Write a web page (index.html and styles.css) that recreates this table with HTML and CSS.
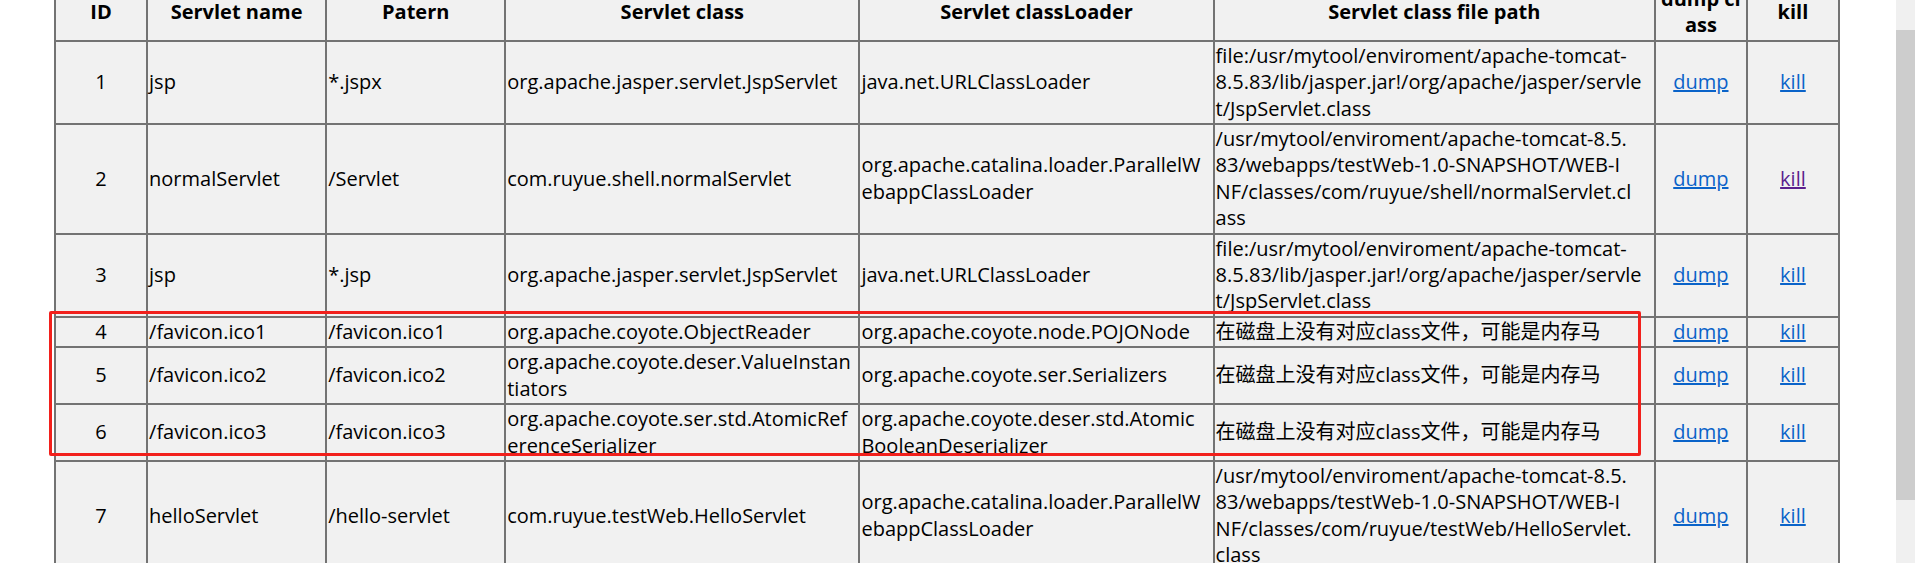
FILE: index.html
```html
<!DOCTYPE html>
<html lang="zh-CN">
<head>
<meta charset="utf-8">
<title>Servlet list</title>
<link rel="stylesheet" href="styles.css">
</head>
<body>
<div class="page">
  <div class="wrap">
    <table class="servlets">
      <colgroup>
        <col class="c-id">
        <col class="c-name">
        <col class="c-pat">
        <col class="c-class">
        <col class="c-loader">
        <col class="c-path">
        <col class="c-dump">
        <col class="c-kill">
      </colgroup>
      <thead>
        <tr>
          <th>ID</th>
          <th>Servlet name</th>
          <th>Patern</th>
          <th>Servlet class</th>
          <th>Servlet classLoader</th>
          <th>Servlet class file path</th>
          <th>dump cl<br>ass</th>
          <th>kill</th>
        </tr>
      </thead>
      <tbody>
        <tr>
          <td class="id">1</td>
          <td>jsp</td>
          <td>*.jspx</td>
          <td>org.apache.jasper.servlet.JspServlet</td>
          <td>java.net.URLClassLoader</td>
          <td>file:/usr/mytool/enviroment/apache-tomcat-<br>8.5.83/lib/jasper.jar!/org/apache/jasper/servle<br>t/JspServlet.class</td>
          <td class="act"><a href="#d1">dump</a></td>
          <td class="act"><a href="#k1">kill</a></td>
        </tr>
        <tr>
          <td class="id">2</td>
          <td>normalServlet</td>
          <td>/Servlet</td>
          <td>com.ruyue.shell.normalServlet</td>
          <td>org.apache.catalina.loader.ParallelW<br>ebappClassLoader</td>
          <td>/usr/mytool/enviroment/apache-tomcat-8.5.<br>83/webapps/testWeb-1.0-SNAPSHOT/WEB-I<br>NF/classes/com/ruyue/shell/normalServlet.cl<br>ass</td>
          <td class="act"><a href="#d2">dump</a></td>
          <td class="act"><a class="visited" href="#k2">kill</a></td>
        </tr>
        <tr>
          <td class="id">3</td>
          <td>jsp</td>
          <td>*.jsp</td>
          <td>org.apache.jasper.servlet.JspServlet</td>
          <td>java.net.URLClassLoader</td>
          <td>file:/usr/mytool/enviroment/apache-tomcat-<br>8.5.83/lib/jasper.jar!/org/apache/jasper/servle<br>t/JspServlet.class</td>
          <td class="act"><a href="#d3">dump</a></td>
          <td class="act"><a href="#k3">kill</a></td>
        </tr>
        <tr>
          <td class="id">4</td>
          <td>/favicon.ico1</td>
          <td>/favicon.ico1</td>
          <td>org.apache.coyote.ObjectReader</td>
          <td>org.apache.coyote.node.POJONode</td>
          <td>在磁盘上没有对应class文件，可能是内存马</td>
          <td class="act"><a href="#d4">dump</a></td>
          <td class="act"><a href="#k4">kill</a></td>
        </tr>
        <tr>
          <td class="id">5</td>
          <td>/favicon.ico2</td>
          <td>/favicon.ico2</td>
          <td>org.apache.coyote.deser.ValueInstan<br>tiators</td>
          <td>org.apache.coyote.ser.Serializers</td>
          <td>在磁盘上没有对应class文件，可能是内存马</td>
          <td class="act"><a href="#d5">dump</a></td>
          <td class="act"><a href="#k5">kill</a></td>
        </tr>
        <tr>
          <td class="id">6</td>
          <td>/favicon.ico3</td>
          <td>/favicon.ico3</td>
          <td>org.apache.coyote.ser.std.AtomicRef<br>erenceSerializer</td>
          <td>org.apache.coyote.deser.std.Atomic<br>BooleanDeserializer</td>
          <td>在磁盘上没有对应class文件，可能是内存马</td>
          <td class="act"><a href="#d6">dump</a></td>
          <td class="act"><a href="#k6">kill</a></td>
        </tr>
        <tr>
          <td class="id">7</td>
          <td>helloServlet</td>
          <td>/hello-servlet</td>
          <td>com.ruyue.testWeb.HelloServlet</td>
          <td>org.apache.catalina.loader.ParallelW<br>ebappClassLoader</td>
          <td>/usr/mytool/enviroment/apache-tomcat-8.5.<br>83/webapps/testWeb-1.0-SNAPSHOT/WEB-I<br>NF/classes/com/ruyue/testWeb/HelloServlet.<br>class</td>
          <td class="act"><a href="#d7">dump</a></td>
          <td class="act"><a href="#k7">kill</a></td>
        </tr>
      </tbody>
    </table>
    <div class="mark"></div>
  </div>
  <div class="scrollbar"><div class="thumb"></div></div>
</div>
</body>
</html>
```
FILE: styles.css
```css
html, body {
  margin: 0;
  padding: 0;
  background: #ffffff;
  overflow: hidden;
  height: 100%;
}

.page {
  font-family: "Open Sans", "Noto Sans CJK SC", sans-serif;
  font-size: 20px;
  line-height: 26.4px;
  color: #000000;
}

.wrap {
  position: relative;
  display: flow-root;
  padding-left: 54px;
}

.servlets {
  border-collapse: collapse;
  table-layout: fixed;
  width: 1786px;
  margin-top: -17px;
  background: #f1f1f1;
  border: 2px solid #737373;
}

.c-id { width: 92px; }
.c-name { width: 179px; }
.c-pat { width: 179px; }
.c-class { width: 354px; }
.c-loader { width: 354px; }
.c-path { width: 441px; }
.c-dump { width: 92px; }
.c-kill { width: 92px; }

.servlets th,
.servlets td {
  border: 2px solid #737373;
  padding: 1px;
  vertical-align: middle;
  text-align: left;
  word-break: break-all;
}

.servlets th {
  font-weight: bold;
  text-align: center;
}

.servlets td.id,
.servlets td.act {
  text-align: center;
}

.servlets a {
  color: #0a63c9;
  text-decoration: underline;
}

.servlets a.visited {
  color: #5b1f8e;
}

.mark {
  position: absolute;
  left: 49px;
  top: 311px;
  width: 1586px;
  height: 139px;
  border: 3px solid #f2201c;
  border-radius: 2px;
}

.scrollbar {
  position: fixed;
  top: 0;
  right: 0;
  width: 19px;
  height: 100%;
  background: #f0f0f0;
}

.thumb {
  margin-top: 30px;
  height: 470px;
  background: #cdcdcd;
}
```
